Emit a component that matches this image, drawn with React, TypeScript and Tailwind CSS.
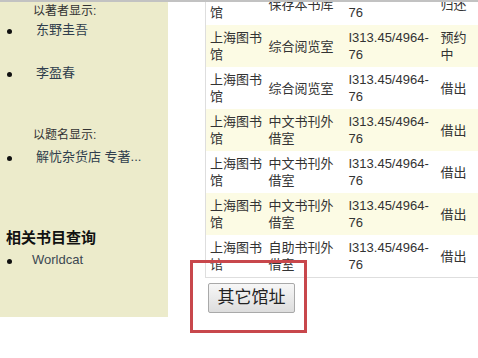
const FONT = { fontFamily: '"Liberation Sans", "Noto Sans CJK SC", sans-serif' };

type Row = { lib: string; room: string; call: string; status: string };

const CALL = "I313.45/4964-76";

const rows: Row[] = [
  { lib: "上海图书馆", room: "保存本书库", call: CALL, status: "归还" },
  { lib: "上海图书馆", room: "综合阅览室", call: CALL, status: "预约中" },
  { lib: "上海图书馆", room: "综合阅览室", call: CALL, status: "借出" },
  { lib: "上海图书馆", room: "中文书刊外借室", call: CALL, status: "借出" },
  { lib: "上海图书馆", room: "中文书刊外借室", call: CALL, status: "借出" },
  { lib: "上海图书馆", room: "中文书刊外借室", call: CALL, status: "借出" },
  { lib: "上海图书馆", room: "自助书刊外借室", call: CALL, status: "借出" },
];

function Bullet() {
  return <span className="mt-[3px] block h-[5px] w-[5px] rounded-full bg-[#111]" />;
}

function Sidebar() {
  return (
    <aside className="flex h-[315px] w-[168px] shrink-0 flex-col bg-[#ecebcb] pt-[1px]">
      <div className="h-[16px] pl-[33px] text-[12px] leading-[16px] text-[#333]">以著者显示:</div>
      <div className="mt-[2px] flex h-[17px] items-center">
        <span className="w-[36px] pl-[7px]"><Bullet /></span>
        <span className="text-[13px] leading-[17px] text-[#2f3e4d]">东野圭吾</span>
      </div>
      <div className="mt-[26px] flex h-[17px] items-center">
        <span className="w-[36px] pl-[7px]"><Bullet /></span>
        <span className="text-[13px] leading-[17px] text-[#2f3e4d]">李盈春</span>
      </div>
      <div className="mt-[46px] h-[16px] pl-[33px] text-[12px] leading-[16px] text-[#333]">以题名显示:</div>
      <div className="mt-[5px] flex h-[17px] items-center">
        <span className="w-[36px] pl-[7px]"><Bullet /></span>
        <span className="whitespace-nowrap text-[13px] leading-[17px] text-[#2f3e4d]">解忧杂货店 专著...</span>
      </div>
      <h3 className="mt-[64px] h-[18px] pl-[6px] text-[15px] font-bold leading-[18px] text-[#111]">相关书目查询</h3>
      <div className="mt-[4px] flex h-[17px] items-center">
        <span className="w-[32px] pl-[7px]"><Bullet /></span>
        <span className="text-[13px] leading-[17px] text-[#3c4851]">Worldcat</span>
      </div>
    </aside>
  );
}

function Holdings() {
  return (
    <div className="ml-[37px] flex-1 overflow-hidden">
      <table className="-mt-[19px] w-[273px] table-fixed border-collapse border-b border-l border-[#dedede] text-[13px] leading-[17px] text-[#333]">
        <colgroup>
          <col className="w-[59px]" />
          <col className="w-[80px]" />
          <col className="w-[92px]" />
          <col className="w-[42px]" />
        </colgroup>
        <tbody>
          {rows.map((r, i) => (
            <tr key={i} className={i % 2 === 1 ? "h-[42px] bg-[#fcfbe4]" : "h-[42px] bg-white"}>
              <td className="py-[4px] pl-[4px] align-middle">{r.lib}</td>
              <td className="py-[4px] pl-[4px] align-middle">{r.room}</td>
              <td className="py-[4px] pl-[4px] align-middle">{r.call}</td>
              <td className="py-[4px] pl-[4px] pr-[2px] align-middle">{r.status}</td>
            </tr>
          ))}
        </tbody>
      </table>
      <button
        type="button"
        className="ml-[3px] mt-[5px] h-[30px] w-[87px] rounded-[2px] border border-[#a9a9a9] bg-gradient-to-b from-[#f7f7f7] to-[#dddddd] text-[17px] leading-[28px] text-[#222]"
      >
        其它馆址
      </button>
    </div>
  );
}

export default function App() {
  return (
    <div className="relative h-[358px] w-[478px] overflow-hidden border-t-2 border-[#c2c2c2] bg-white" style={FONT}>
      <div className="flex">
        <Sidebar />
        <Holdings />
      </div>
      {/* red annotation box around the button */}
      <div className="pointer-events-none absolute left-[190px] top-[258px] h-[73px] w-[117px] border-[3px] border-[#c8474c]" />
    </div>
  );
}
